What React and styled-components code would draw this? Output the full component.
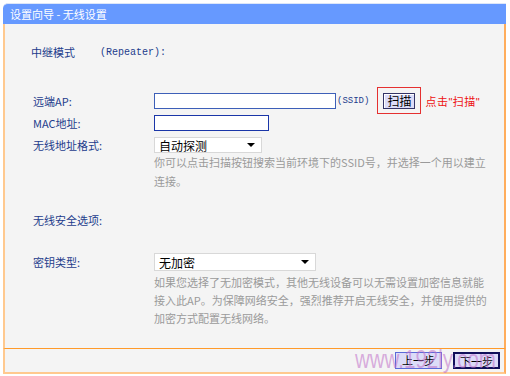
import React from "react";
import styled, { createGlobalStyle } from "styled-components";

const GlobalStyle = createGlobalStyle`
  html, body {
    margin: 0;
    padding: 0;
    background: #ffffff;
  }
  body {
    font-family: "Noto Sans CJK SC", "Liberation Sans", sans-serif;
    font-size: 11px;
  }
`;

const Frame = styled.div`
  position: relative;
  width: 506px;
  height: 376px;
  padding: 3px 0 0 3px;
  box-sizing: border-box;
  display: flex;
  flex-direction: column;
`;

const TitleBar = styled.div`
  height: 20px;
  flex: none;
  background: #6699ff;
  border-top: 1px solid #dde6f8;
  border-radius: 5px 0 0 0;
  color: #ffffff;
  font-size: 11px;
  line-height: 20px;
  padding-left: 7px;
`;

const Body = styled.div`
  height: 324px;
  flex: none;
  background: #f4f4f4;
  border-left: 2px solid #ffc98f;
  border-right: 2px solid #ffad5c;
  padding: 18px 0 0 26px;
  box-sizing: border-box;
`;

const Footer = styled.div`
  height: 23px;
  flex: none;
  background: #f4f4f4;
  border-top: 1px solid #ff9a2a;
  border-left: 2px solid #ffc98f;
  border-right: 2px solid #ffad5c;
  border-bottom: 2px solid #ffc98f;
  display: flex;
  justify-content: flex-end;
  align-items: center;
  gap: 11px;
  padding-right: 4px;
`;

const Row = styled.div`
  display: flex;
  align-items: center;
  height: ${(p) => p.h || 20}px;
  margin-top: ${(p) => p.mt || 0}px;
`;

const Label = styled.div`
  width: ${(p) => (p.auto ? "auto" : "121px")};
  padding-left: ${(p) => (p.auto ? 0 : 2)}px;
  flex: none;
  color: #1d3c8c;
  font-size: 11px;
`;

const ModeNote = styled.span`
  color: #1d3c8c;
  font-family: "Liberation Mono", monospace;
  font-size: 10px;
  margin-left: 25px;
`;

const Field = styled.div`
  display: flex;
  align-items: center;
`;

const TextBox = styled.div`
  width: ${(p) => p.w}px;
  height: 14px;
  background: #ffffff;
  border: 1px solid ${(p) => (p.light ? "#3d5fb8" : "#1a36a8")};
  box-sizing: content-box;
`;

const Ssid = styled.span`
  color: #1d3c8c;
  font-family: "Liberation Mono", monospace;
  font-size: 9px;
  margin-left: 1px;
`;

const ScanFrame = styled.div`
  margin-left: 8px;
  width: 42px;
  height: 25px;
  border: 1px solid #e53030;
  display: flex;
  align-items: center;
  justify-content: center;
`;

const ScanButton = styled.div`
  width: 30px;
  height: 14px;
  background: #dcdcf8;
  border: 1px solid #333366;
  box-shadow: inset 1px 1px 0 #ffffff;
  color: #000;
  font-size: 12px;
  line-height: 14px;
  text-align: center;
`;

const Hint = styled.span`
  color: #ee1111;
  font-family: "Liberation Sans", "Noto Sans CJK SC", sans-serif;
  font-size: 11px;
  margin-left: 4px;
  letter-spacing: 0.5px;
`;

const Select = styled.div`
  width: ${(p) => p.w}px;
  height: ${(p) => p.h || 16}px;
  background: #ffffff;
  border: 1px solid #d8d8d8;
  box-sizing: border-box;
  display: flex;
  align-items: center;
  justify-content: space-between;
  padding: 0 6px 0 4px;
  font-size: 12px;
  color: #000;
`;

const Arrow = styled.span`
  width: 0;
  height: 0;
  border-left: 4px solid transparent;
  border-right: 4px solid transparent;
  border-top: 4px solid #000;
`;

const Help = styled.div`
  margin-left: 123px;
  margin-top: ${(p) => p.mt || 0}px;
  color: #9a9a9a;
  font-size: 11px;
  line-height: ${(p) => p.lh || 19}px;
  white-space: nowrap;
`;

const StepButton = styled.div`
  width: ${(p) => (p.active ? 43 : 45)}px;
  height: ${(p) => (p.active ? 13 : 15)}px;
  background: #dcdcf8;
  border: ${(p) => (p.active ? "2px solid #10105a" : "1px solid #5b6ad8")};
  color: #000;
  font-size: 11px;
  line-height: 14px;
  text-align: center;
`;

const Watermark = styled.div`
  position: absolute;
  left: 355px;
  top: 347px;
  font-family: "Liberation Sans", sans-serif;
  font-size: 25px;
  line-height: 1;
  color: rgba(190, 110, 200, 0.55);
  transform: scaleX(0.82);
  transform-origin: left top;
  white-space: nowrap;
  pointer-events: none;
`;

export default function App() {
  return (
    <>
      <GlobalStyle />
      <Frame>
        <TitleBar>设置向导 - 无线设置</TitleBar>
        <Body>
          <Row h={20}>
            <Label auto>中继模式</Label>
            <ModeNote>(Repeater):</ModeNote>
          </Row>
          <Row h={27} mt={25}>
            <Label>远端AP:</Label>
            <Field>
              <TextBox w={180} light />
              <Ssid>(SSID)</Ssid>
              <ScanFrame>
                <ScanButton>扫描</ScanButton>
              </ScanFrame>
              <Hint>点击"扫描"</Hint>
            </Field>
          </Row>
          <Row h={18}>
            <Label>MAC地址:</Label>
            <TextBox w={113} />
          </Row>
          <Row h={18} mt={4}>
            <Label>无线地址格式:</Label>
            <Select w={108}>
              自动探测
              <Arrow />
            </Select>
          </Row>
          <Help mt={-1}>
            你可以点击扫描按钮搜索当前环境下的SSID号，并选择一个用以建立
            <br />
            连接。
          </Help>
          <Row h={20} mt={19}>
            <Label>无线安全选项:</Label>
          </Row>
          <Row h={20} mt={22}>
            <Label>密钥类型:</Label>
            <Select w={162} h={18}>
              无加密
              <Arrow />
            </Select>
          </Row>
          <Help mt={1} lh={18}>
            如果您选择了无加密模式，其他无线设备可以无需设置加密信息就能
            <br />
            接入此AP。为保障网络安全，强烈推荐开启无线安全，并使用提供的
            <br />
            加密方式配置无线网络。
          </Help>
        </Body>
        <Footer>
          <StepButton>上一步</StepButton>
          <StepButton active>下一步</StepButton>
        </Footer>
        <Watermark>www.192ly.com</Watermark>
      </Frame>
    </>
  );
}
